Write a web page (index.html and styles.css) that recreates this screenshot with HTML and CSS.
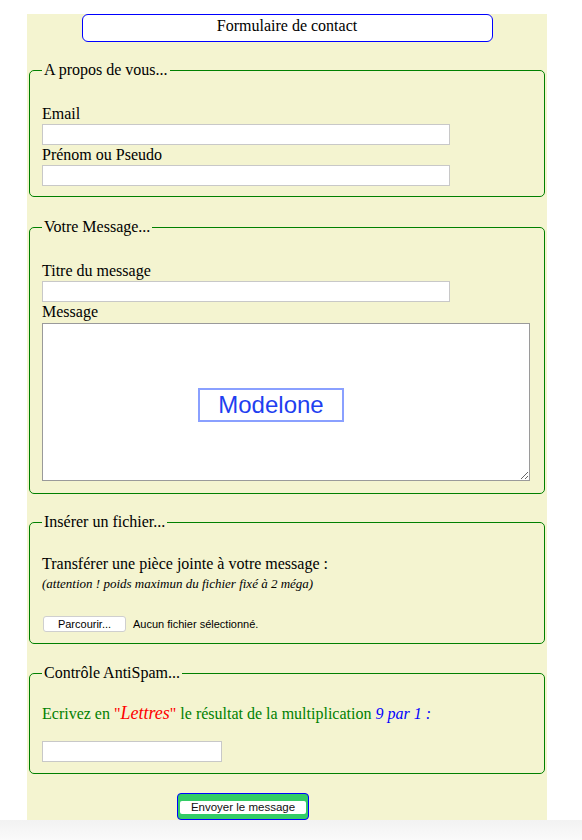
FILE: index.html
```html
<!DOCTYPE html>
<html lang="fr">
<head>
<meta charset="utf-8">
<title>Formulaire de contact</title>
<link rel="stylesheet" href="styles.css">
</head>
<body>
<div class="page">
  <form class="contact">
    <div class="title">Formulaire de contact</div>

    <fieldset class="group group-about">
      <legend>A propos de vous...</legend>
      <label class="field-label" for="email">Email</label>
      <input class="text-input" id="email" type="text">
      <label class="field-label" for="pseudo">Prénom ou Pseudo</label>
      <input class="text-input" id="pseudo" type="text">
    </fieldset>

    <fieldset class="group group-message">
      <legend>Votre Message...</legend>
      <label class="field-label" for="titre">Titre du message</label>
      <input class="text-input" id="titre" type="text">
      <label class="field-label" for="message">Message</label>
      <div class="message-wrap">
        <textarea class="message" id="message"></textarea>
        <div class="watermark">Modelone</div>
      </div>
    </fieldset>

    <fieldset class="group group-file">
      <legend>Insérer un fichier...</legend>
      <p class="file-intro">Transférer une pièce jointe à votre message :</p>
      <p class="file-note">(attention ! poids maximun du fichier fixé à 2 méga)</p>
      <div class="file-row">
        <span class="file-btn">Parcourir...</span>
        <span class="file-status">Aucun fichier sélectionné.</span>
      </div>
    </fieldset>

    <fieldset class="group group-spam">
      <legend>Contrôle AntiSpam...</legend>
      <p class="spam-question">Ecrivez en <span class="red">"<em>Lettres</em>"</span> le résultat de la multiplication <em class="blue">9 par 1 :</em></p>
      <input class="text-input short" type="text">
    </fieldset>

    <div class="submit-row">
      <button class="submit" type="button"><span class="submit-face">Envoyer le message</span></button>
    </div>
  </form>
</div>
<div class="bottom-strip"></div>
</body>
</html>
```

FILE: styles.css
```css
html, body {
  margin: 0;
  padding: 0;
  background: #ffffff;
}

body {
  font-family: "Liberation Serif", "Times New Roman", serif;
  font-size: 16px;
  color: #000;
}

.page {
  padding-top: 14px;
}

.contact {
  margin-left: 27px;
  width: 520px;
  background: #f4f4d0;
  display: flow-root;
}

.title {
  box-sizing: border-box;
  width: 411px;
  height: 28px;
  margin: 0 auto 19px;
  padding: 2px 0 6px;
  line-height: 18px;
  text-align: center;
  background: #fff;
  border: 1px solid #0000ff;
  border-radius: 6px;
}

.group {
  margin: 0 2px 20px;
  padding: 25px 12px 10px;
  border: 1px solid #008000;
  border-radius: 5px;
  min-width: 0;
}

.group legend {
  padding: 0 2px;
  line-height: 18px;
  font-size: 16px;
}

.field-label {
  display: block;
  line-height: 20px;
}

.text-input {
  display: block;
  box-sizing: border-box;
  width: 408px;
  height: 21px;
  margin: 0;
  padding: 0 2px;
  border: 1px solid #c8c8c8;
  background: #fff;
  font: 13px "Liberation Sans", Arial, sans-serif;
}

.text-input.short {
  width: 180px;
}

.group-message {
  margin-top: 21px;
  margin-bottom: 19px;
  padding-bottom: 12px;
}

.message-wrap {
  position: relative;
  margin-top: 1px;
}

.message {
  display: block;
  box-sizing: border-box;
  width: 488px;
  height: 158px;
  margin: 0;
  padding: 2px;
  border: 1px solid #9a9a9a;
  background: #fff;
  resize: both;
  font: 13px "Liberation Sans", Arial, sans-serif;
}

.watermark {
  position: absolute;
  left: 156px;
  top: 65px;
  box-sizing: border-box;
  width: 146px;
  height: 34px;
  border: 2px solid #8aa0ff;
  color: #1f3ff0;
  font: 24px/30px "Liberation Sans", Arial, sans-serif;
  text-align: center;
}

.group-file {
  padding-top: 23px;
  padding-bottom: 11px;
}

.file-intro {
  margin: 0 0 2px;
  line-height: 20px;
}

.file-note {
  margin: 0;
  font-size: 13px;
  font-style: italic;
  line-height: 16px;
}

.file-row {
  display: flex;
  align-items: center;
  gap: 7px;
  margin-top: 24px;
  padding-left: 1px;
}

.file-btn {
  box-sizing: border-box;
  width: 83px;
  height: 16px;
  border: 1px solid #cfcfcf;
  border-radius: 3px;
  background: #fff;
  font: 11px/14px "Liberation Sans", Arial, sans-serif;
  text-align: center;
}

.file-status {
  font: 11px "Liberation Sans", Arial, sans-serif;
}

.group-spam {
  padding-top: 22px;
  padding-bottom: 11px;
  margin-bottom: 19px;
}

.spam-question {
  margin: 0 0 17px;
  line-height: 20px;
  color: #008000;
}

.spam-question .red {
  color: #ff0000;
}

.spam-question .red em {
  font-size: 18px;
  line-height: 16px;
}

.spam-question em {
  font-style: italic;
}

.spam-question .blue {
  color: #0000ff;
}

.submit-row {
  padding-left: 150px;
  display: flex;
}

.submit {
  box-sizing: border-box;
  width: 132px;
  height: 27px;
  margin: 0;
  padding: 7px 2px 5px;
  border: 1px solid #0000ff;
  border-radius: 4px;
  background: #33cc66;
  display: flex;
  cursor: pointer;
}

.submit-face {
  flex: 1;
  height: 13px;
  background: #fff;
  border-radius: 2px;
  font: 11.5px/13px "Liberation Sans", Arial, sans-serif;
  color: #111;
  text-align: center;
}

.bottom-strip {
  height: 20px;
  background: linear-gradient(#f2f2f2, #fafafa);
}
```
